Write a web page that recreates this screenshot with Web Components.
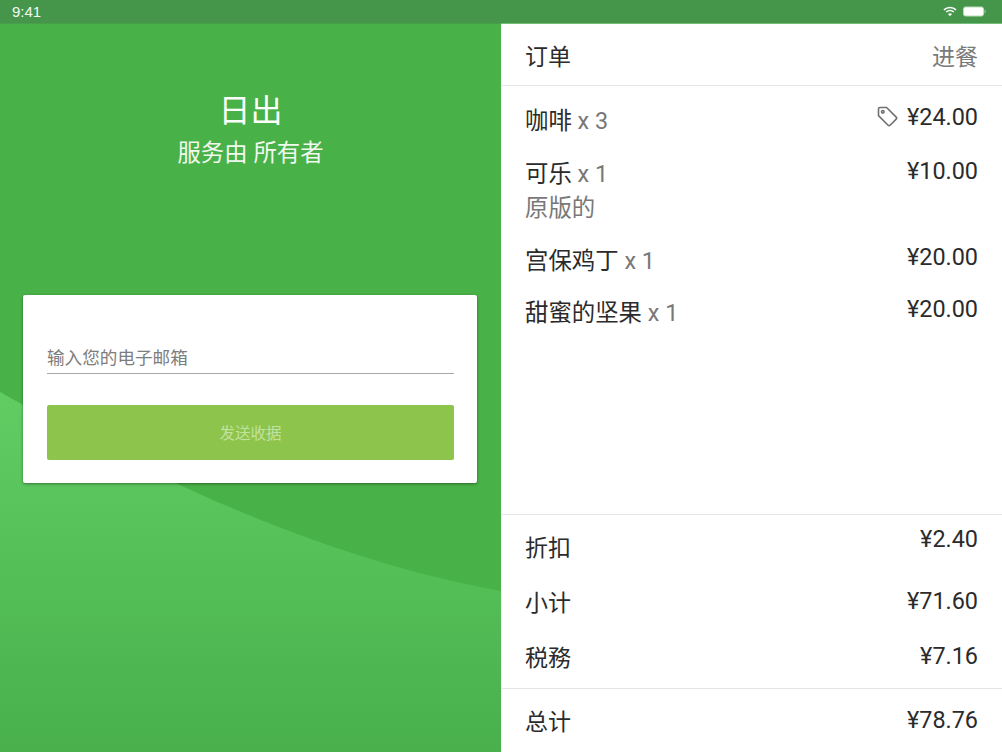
<!DOCTYPE html>
<html lang="zh">
<head>
<meta charset="utf-8">
<title>收据</title>
<style>
  html, body { margin: 0; padding: 0; height: 100%; overflow: hidden; }
  body { font-family: Roboto, "Noto Sans CJK SC", sans-serif; }
  receipt-app { width: 1002px; height: 752px; }
</style>
</head>
<body>
<receipt-app></receipt-app>
<script>
const FONT = 'Roboto, "Noto Sans CJK SC", sans-serif';

class StatusBar extends HTMLElement {
  constructor() {
    super();
    this.attachShadow({ mode: 'open' });
    this.shadowRoot.innerHTML = `
      <style>
        :host {
          display: flex;
          align-items: center;
          justify-content: space-between;
          height: 23px;
          padding: 0 16px 0 12px;
          background: #45964b;
          color: #f4f8f4;
          font: 15px/23px "Liberation Sans", sans-serif;
          border-bottom: 1px solid;
          border-image: linear-gradient(90deg, #45a049 50%, #74bd78 50%) 1;
        }
        .icons { display: flex; align-items: center; gap: 6px; }
        svg { display: block; }
      </style>
      <span>9:41</span>
      <div class="icons">
        <svg width="14" height="11" viewBox="0 0 15 11" fill="none" stroke="#fff" stroke-width="1.7">
          <path d="M1 3.8 C4.6 .4 10.4 .4 14 3.8"/>
          <path d="M3.4 6 C5.6 4 9.4 4 11.6 6"/>
          <path d="M7.5 10.6 L5.3 8.1 C6.6 7.1 8.4 7.1 9.7 8.1 Z" fill="#fff" stroke="none"/>
        </svg>
        <svg width="23" height="11" viewBox="0 0 23 11">
          <rect x=".5" y="1" width="20" height="9" rx="2" fill="#fff" stroke="#b9dcbb"/>
          <rect x="21.4" y="3.8" width="1.2" height="3.4" fill="#8fc493"/>
        </svg>
      </div>
    `;
  }
}

class ReceiptForm extends HTMLElement {
  constructor() {
    super();
    this.attachShadow({ mode: 'open' });
    this.shadowRoot.innerHTML = `
      <style>
        :host {
          display: block;
          box-sizing: border-box;
          width: 454px;
          height: 188px;
          padding: 49px 23px 22px 24px;
          background: #fff;
          border-radius: 2px;
          box-shadow: 0 1px 3px rgba(0,0,0,.4);
        }
        .field {
          box-sizing: border-box;
          height: 30px;
          border-bottom: 1px solid #a8a8a8;
          color: #7d7d7d;
          font: 17.6px/28px ${FONT};
        }
        button {
          display: block;
          width: 100%;
          height: 55px;
          margin-top: 31px;
          border: none;
          border-radius: 2px;
          background: #8dc44b;
          color: #c3e2a0;
          font: 15.5px ${FONT};
          padding: 0 0 1px;
        }
      </style>
      <div class="field">输入您的电子邮箱</div>
      <button type="button">发送收据</button>
    `;
  }
}

class BrandPanel extends HTMLElement {
  constructor() {
    super();
    this.attachShadow({ mode: 'open' });
    this.shadowRoot.innerHTML = `
      <style>
        :host {
          display: flex;
          flex-direction: column;
          align-items: flex-start;
          position: relative;
          width: 501px;
          height: 728px;
          background: #48b147;
          color: #fff;
          font-family: ${FONT};
          overflow: hidden;
        }
        svg.wave { position: absolute; left: 0; top: 0; }
        .title, .sub, receipt-form { position: relative; }
        .title, .sub { align-self: stretch; text-align: center; }
        .title { margin-top: 65px; font-size: 32px; line-height: 44px; color: #fbfefb; }
        .sub { font-size: 23.4px; line-height: 34px; margin-top: 3px; color: #f0f9f0; }
        receipt-form { margin: 125px 0 0 23px; }
      </style>
      <svg class="wave" width="501" height="728" viewBox="0 0 501 728">
        <defs>
          <linearGradient id="g" x1="0" y1="0" x2="0" y2="1">
            <stop offset="0" stop-color="#60cd63"/>
            <stop offset="1" stop-color="#49b04b"/>
          </linearGradient>
        </defs>
        <path d="M0 368 C130 440 300 530 501 567 V728 H0 Z" fill="url(#g)"/>
      </svg>
      <div class="title">日出</div>
      <div class="sub">服务由 所有者</div>
      <receipt-form></receipt-form>
    `;
  }
}

class OrderLine extends HTMLElement {
  constructor() {
    super();
    this.attachShadow({ mode: 'open' });
    const qty = this.getAttribute('qty');
    const note = this.getAttribute('note');
    const tag = this.hasAttribute('tag');
    this.shadowRoot.innerHTML = `
      <style>
        :host {
          display: flex;
          justify-content: space-between;
          align-items: flex-start;
          color: #2b2b2b;
          font: 23.4px/34px ${FONT};
        }
        :host([tag]) { min-height: 35px; }
        :host([note]) { min-height: 69px; }
        .label { margin: 1px 0 -1px; }
        .qty, .note { color: #787878; }
        .price { display: flex; align-items: center; gap: 9px; margin-top: -3px; }
        :host([note]) .price { margin-top: -2px; }
        svg { display: block; margin-top: -1px; }
      </style>
      <div class="label">
        <div><slot></slot>${qty ? ` <span class="qty">x ${qty}</span>` : ''}</div>
        ${note ? `<div class="note">${note}</div>` : ''}
      </div>
      <div class="price">
        ${tag ? `<svg width="21" height="21" viewBox="0 0 21 21" fill="none" stroke="#707070" stroke-width="1.6" stroke-linejoin="round">
          <path d="M1.5 2.9 C1.5 2.1 2.1 1.5 2.9 1.5 H9.6 L19.2 11.1 C19.8 11.7 19.8 12.5 19.2 13.1 L13.1 19.2 C12.5 19.8 11.7 19.8 11.1 19.2 L1.5 9.6 Z"/>
          <circle cx="5.8" cy="5.8" r="1.3"/>
        </svg>` : ''}
        <span>${this.getAttribute('price')}</span>
      </div>
    `;
  }
}

class SummaryLine extends HTMLElement {
  constructor() {
    super();
    this.attachShadow({ mode: 'open' });
    this.shadowRoot.innerHTML = `
      <style>
        :host {
          display: flex;
          justify-content: space-between;
          align-items: flex-start;
          height: 55px;
          color: #2b2b2b;
          font: 23px/34px ${FONT};
        }
        .label { margin-top: 10px; }
        .price { margin-top: 7px; font-size: 23.4px; }
        :host([raised]) .price { margin-top: 0; }
      </style>
      <div class="label"><slot></slot></div>
      <div class="price">${this.getAttribute('price')}</div>
    `;
  }
}

class OrderPanel extends HTMLElement {
  constructor() {
    super();
    this.attachShadow({ mode: 'open' });
    this.shadowRoot.innerHTML = `
      <style>
        :host {
          display: flex;
          flex-direction: column;
          box-sizing: border-box;
          width: 501px;
          height: 728px;
          background: #fff;
          border-left: 1px solid #effcf0;
          font-family: ${FONT};
        }
        header {
          display: flex;
          justify-content: space-between;
          align-items: center;
          box-sizing: border-box;
          height: 62px;
          padding: 0 24px 0 23px;
          border-bottom: 1px solid #e4e4e4;
          font-size: 23px;
          color: #2b2b2b;
        }
        header .mode { color: #7a7a7a; }
        .items {
          flex: 1;
          display: flex;
          flex-direction: column;
          gap: 18px;
          padding: 17px 24px 0 23px;
        }
        .summary {
          box-sizing: border-box;
          height: 174px;
          padding: 7px 24px 0 23px;
          border-top: 1px solid #e4e4e4;
        }
        .total {
          box-sizing: border-box;
          height: 64px;
          padding: 7px 24px 0 23px;
          border-top: 1px solid #e4e4e4;
        }
      </style>
      <header><span>订单</span><span class="mode">进餐</span></header>
      <div class="items">
        <order-line qty="3" price="¥24.00" tag>咖啡</order-line>
        <order-line qty="1" price="¥10.00" note="原版的">可乐</order-line>
        <order-line qty="1" price="¥20.00">宫保鸡丁</order-line>
        <order-line qty="1" price="¥20.00">甜蜜的坚果</order-line>
      </div>
      <div class="summary">
        <summary-line price="¥2.40" raised>折扣</summary-line>
        <summary-line price="¥71.60">小计</summary-line>
        <summary-line price="¥7.16">税務</summary-line>
      </div>
      <div class="total">
        <summary-line price="¥78.76">总计</summary-line>
      </div>
    `;
  }
}

class ReceiptApp extends HTMLElement {
  constructor() {
    super();
    this.attachShadow({ mode: 'open' });
    this.shadowRoot.innerHTML = `
      <style>
        :host { display: flex; flex-direction: column; }
        .main { display: flex; }
      </style>
      <status-bar></status-bar>
      <div class="main">
        <brand-panel></brand-panel>
        <order-panel></order-panel>
      </div>
    `;
  }
}

customElements.define('status-bar', StatusBar);
customElements.define('receipt-form', ReceiptForm);
customElements.define('brand-panel', BrandPanel);
customElements.define('order-line', OrderLine);
customElements.define('summary-line', SummaryLine);
customElements.define('order-panel', OrderPanel);
customElements.define('receipt-app', ReceiptApp);
</script>
</body>
</html>
